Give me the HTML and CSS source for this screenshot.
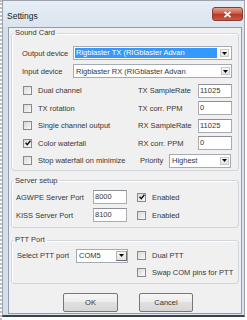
FILE: index.html
```html
<!DOCTYPE html>
<html lang="en">
<head>
    <meta charset="UTF-8">
    <meta name="viewport" content="width=device-width, initial-scale=1.0">
    <title>Settings</title>
    <link rel="stylesheet" href="styles.css">
</head>
<body>
    <div class="page">
        <div class="window">
            <!-- Title bar -->
            <div class="titlebar">
                <span class="title">Settings</span>
                <span class="close">
                    <svg width="9" height="7" viewBox="0 0 9 7"><path d="M1.5 0.8 L7.5 6.2 M7.5 0.8 L1.5 6.2" stroke="#fff" stroke-width="1.8"/></svg>
                </span>
            </div>

            <div class="client">
                <!-- Sound Card -->
                <fieldset class="group">
                    <legend>Sound Card</legend>
                    <div class="inner sound">
                        <div class="devrow">
                            <span class="devlabel">Output device</span>
                            <div class="combo dev selected">
                                <span class="val">Rigblaster TX (RIGblaster Advan</span>
                                <span class="arrow"><svg width="5" height="3" viewBox="0 0 5 3"><path d="M0 0 H5 L2.5 3 Z" fill="#000"/></svg></span>
                            </div>
                        </div>
                        <div class="devrow">
                            <span class="devlabel">Input device</span>
                            <div class="combo dev">
                                <span class="val">Rigblaster RX (RIGblaster Advan</span>
                                <span class="arrow"><svg width="5" height="3" viewBox="0 0 5 3"><path d="M0 0 H5 L2.5 3 Z" fill="#000"/></svg></span>
                            </div>
                        </div>

                        <div class="opts">
                            <div class="check"><span class="box"></span>Dual channel</div>
                            <div class="field"><span class="flabel">TX SampleRate</span><span class="edit">11025</span></div>

                            <div class="check"><span class="box"></span>TX rotation</div>
                            <div class="field"><span class="flabel">TX corr. PPM</span><span class="edit">0</span></div>

                            <div class="check"><span class="box"></span>Single channel output</div>
                            <div class="field"><span class="flabel">RX SampleRate</span><span class="edit">11025</span></div>

                            <div class="check"><span class="box checked"><svg width="6" height="6" viewBox="0 0 6 6"><path d="M0.6 2.8 L2.3 4.7 L5.4 0.8" stroke="#111" stroke-width="1.4" fill="none"/></svg></span>Color waterfall</div>
                            <div class="field"><span class="flabel">RX corr. PPM</span><span class="edit">0</span></div>

                            <div class="check"><span class="box"></span>Stop waterfall on minimize</div>
                            <div class="field"><span class="flabel prio">Priority</span>
                                <div class="combo prio-combo">
                                    <span class="val">Highest</span>
                                    <span class="arrow"><svg width="5" height="3" viewBox="0 0 5 3"><path d="M0 0 H5 L2.5 3 Z" fill="#000"/></svg></span>
                                </div>
                            </div>
                        </div>
                    </div>
                </fieldset>

                <!-- Server setup -->
                <fieldset class="group server">
                    <legend>Server setup</legend>
                    <div class="inner ports">
                        <span>AGWPE Server Port</span>
                        <span class="edit">8000</span>
                        <div class="check gap"><span class="box checked"><svg width="6" height="6" viewBox="0 0 6 6"><path d="M0.6 2.8 L2.3 4.7 L5.4 0.8" stroke="#111" stroke-width="1.4" fill="none"/></svg></span>Enabled</div>

                        <span>KISS Server Port</span>
                        <span class="edit">8100</span>
                        <div class="check gap"><span class="box"></span>Enabled</div>
                    </div>
                </fieldset>

                <!-- PTT Port -->
                <fieldset class="group ptt">
                    <legend>PTT Port</legend>
                    <div class="inner pttgrid">
                        <span>Select PTT port</span>
                        <div class="combo com">
                            <span class="val">COM5</span>
                            <span class="arrow btn"><svg width="5" height="3" viewBox="0 0 5 3"><path d="M0 0 H5 L2.5 3 Z" fill="#000"/></svg></span>
                        </div>
                        <div class="check gap2"><span class="box"></span>Dual PTT</div>

                        <span></span>
                        <span></span>
                        <div class="check gap2"><span class="box"></span>Swap COM pins for PTT</div>
                    </div>
                </fieldset>

                <div class="buttons">
                    <button class="ok">OK</button>
                    <button class="cancel">Cancel</button>
                </div>
            </div>
        </div>
    </div>
</body>
</html>
```

FILE: styles.css
```css
/* General */
body {
    margin: 0;
    background: #fff;
    font-family: "Liberation Sans", Arial, sans-serif;
    font-size: 7.5px;
    color: #363636;
}
.page {
    width: 245px;
    height: 320px;
    border-left: 2px dotted #bdbdbd;
}

/* Window frame */
.window {
    width: 241px;
    height: 314px;
    border: 1px solid #9aa3ad;
    border-bottom: 2px solid #39424d;
    background: linear-gradient(90deg, #d6deea, #e3eaf3 40%, #d9e3ee);
}
.titlebar {
    height: 26px;
    display: flex;
    justify-content: space-between;
    align-items: flex-start;
    background: linear-gradient(180deg, #e6edf5, #dbe5ef);
}
.title {
    font-size: 8.5px;
    color: #1b1b1b;
    margin: 10px 0 0 4px;
}
.close {
    width: 29px;
    height: 12px;
    margin: 6px 1px 0 0;
    border: 1px solid #8c3b33;
    border-radius: 3px;
    background: linear-gradient(180deg, #e3a497, #cc5a48 45%, #b83a27 55%, #c85a42);
    display: flex;
    align-items: center;
    justify-content: center;
}

/* Client area */
.client {
    width: 232px;
    height: 285px;
    margin-left: 5px;
    border: 1px solid #8e9cad;
    background: #f0f0f0;
}

/* Group boxes */
.group {
    margin: 0 2px;
    padding: 0;
    min-width: 0;
    border: 1px solid #d0d6dc;
    border-radius: 3px;
    box-shadow: inset 1px 1px 0 #fff;
}
.group legend {
    margin-left: 2px;
    padding: 0 2px 0 1px;
    line-height: 10px;
}
.server {
    margin-top: 5px;
}
.ptt {
    margin-top: 7px;
}
.inner {
    padding: 6px 6px 0 10px;
}

/* Sound card */
.devrow {
    height: 18px;
    display: flex;
    align-items: center;
}
.devlabel {
    width: 51px;
}
.opts {
    margin-top: 2px;
    display: grid;
    grid-template-columns: 116px 1fr;
    grid-auto-rows: 17.5px;
    align-items: center;
}
.field {
    display: flex;
    align-items: center;
}
.flabel {
    width: 60px;
}
.flabel.prio {
    width: 29px;
    margin-left: 2px;
}

/* Controls */
.combo {
    height: 12px;
    display: flex;
    align-items: center;
    border: 1px solid #a4abb3;
    background: #fff;
}
.combo .val {
    flex: 1;
    padding-left: 2px;
    white-space: nowrap;
    overflow: hidden;
}
.combo.dev {
    width: 157px;
}
.combo.selected .val {
    flex: none;
    width: 141px;
    height: 10px;
    line-height: 10px;
    margin: 0 3px 0 1px;
    padding-left: 1px;
    background: #3399ff;
    color: #fff;
}
.combo.prio-combo {
    width: 60px;
}
.combo.com {
    width: 50px;
}
.arrow {
    width: 9px;
    height: 8px;
    margin-right: 1px;
    border: 1px solid #c9c9c9;
    background: linear-gradient(180deg, #f7f7f7, #e3e3e3);
    display: flex;
    align-items: center;
    justify-content: center;
    box-sizing: border-box;
}
.arrow.btn {
    width: 11px;
    height: 10px;
    margin-right: 0;
    border: 1px solid #b3b3b3;
    border-right-color: #6e6e6e;
    border-bottom-color: #6e6e6e;
}
.edit {
    width: 31px;
    height: 12px;
    line-height: 12px;
    padding-left: 1px;
    border: 1px solid #a9adb3;
    border-top-color: #8d9197;
    background: #fff;
    box-sizing: content-box;
}

/* Check boxes */
.check {
    display: flex;
    align-items: center;
    white-space: nowrap;
}
.box {
    width: 7px;
    height: 7px;
    margin: 0 6px 0 1px;
    border: 1px solid #8a8a8a;
    background: linear-gradient(135deg, #d8d8d8, #fafafa);
    display: flex;
    align-items: center;
    justify-content: center;
}

/* Server setup and PTT */
.ports {
    padding: 2.5px 0 3px 4px;
    display: grid;
    grid-template-columns: 77px 33px 1fr;
    grid-auto-rows: 18px;
    align-items: center;
}
.ports .edit {
    height: 12px;
}
.gap {
    margin-left: 10px;
}
.pttgrid {
    padding: 2px 0 1.5px 5px;
    display: grid;
    grid-template-columns: 59px 52px 1fr;
    grid-auto-rows: 17px;
    align-items: center;
}
.gap2 {
    margin-left: 8px;
}

/* Buttons */
.buttons {
    margin-top: 9px;
    padding-left: 54px;
    display: flex;
    gap: 21px;
}
button {
    width: 55px;
    height: 19px;
    font-family: inherit;
    font-size: 7.5px;
    color: #333;
    border: 1px solid #777;
    border-radius: 2px;
    background: linear-gradient(180deg, #f6f6f6, #ececec 50%, #e0e0e0 50%, #d6d6d6);
    padding: 0;
}
.cancel {
    width: 54px;
}
```
